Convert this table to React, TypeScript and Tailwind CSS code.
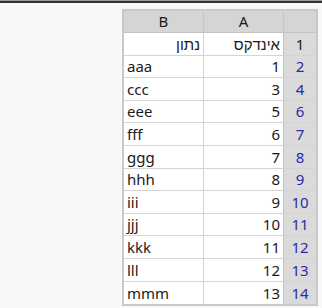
const rows: { n: number; a: string; b: string; head?: boolean }[] = [
  { n: 1, a: 'אינדקס', b: 'נתון', head: true },
  { n: 2, a: '1', b: 'aaa' },
  { n: 4, a: '3', b: 'ccc' },
  { n: 6, a: '5', b: 'eee' },
  { n: 7, a: '6', b: 'fff' },
  { n: 8, a: '7', b: 'ggg' },
  { n: 9, a: '8', b: 'hhh' },
  { n: 10, a: '9', b: 'iii' },
  { n: 11, a: '10', b: 'jjj' },
  { n: 12, a: '11', b: 'kkk' },
  { n: 13, a: '12', b: 'lll' },
  { n: 14, a: '13', b: 'mmm' },
]

export default function App() {
  return (
    <div
      className="w-[322px] h-[308px] bg-[#f8f8f8] overflow-hidden"
      style={{ fontFamily: '"Noto Sans", "Liberation Sans", "DejaVu Sans", sans-serif' }}
    >
      <div className="h-[1px] bg-[#9a9a9a]" />
      <div className="h-[2px] bg-[#333333]" />
      <div className="pt-[6px] pl-[122px]">
        <div className="w-[196px] border-2 border-[#c9c9c9] bg-white text-[15px] leading-none text-[#1a1a1a]">
          {/* column header */}
          <div className="grid grid-cols-[80px_80px_32px] h-[22px] bg-[#d5d5d5] border-b border-[#c4c4c4]">
            <div className="flex items-center justify-center border-r border-[#c4c4c4]">B</div>
            <div className="flex items-center justify-center border-r border-[#c4c4c4]">A</div>
            <div />
          </div>
          {rows.map((r) => (
            <div key={r.n} className="grid grid-cols-[80px_80px_32px] h-[22.6px] border-b border-[#d4d4d4] last:border-b-0">
              <div
                className={`flex items-end pb-[3px] px-[3px] border-r border-[#d4d4d4] ${r.head ? 'justify-end' : 'justify-start'}`}
              >
                <span dir={r.head ? 'rtl' : 'ltr'}>{r.b}</span>
              </div>
              <div className="flex items-end justify-end pb-[3px] px-[3px] border-r border-[#c4c4c4]">
                <span dir={r.head ? 'rtl' : 'ltr'}>{r.a}</span>
              </div>
              <div
                className={`flex items-end justify-center pb-[3px] bg-[#dadada] ${r.head ? 'text-[#222]' : 'text-[#2b2ba8]'}`}
              >
                {r.n}
              </div>
            </div>
          ))}
        </div>
      </div>
    </div>
  )
}
